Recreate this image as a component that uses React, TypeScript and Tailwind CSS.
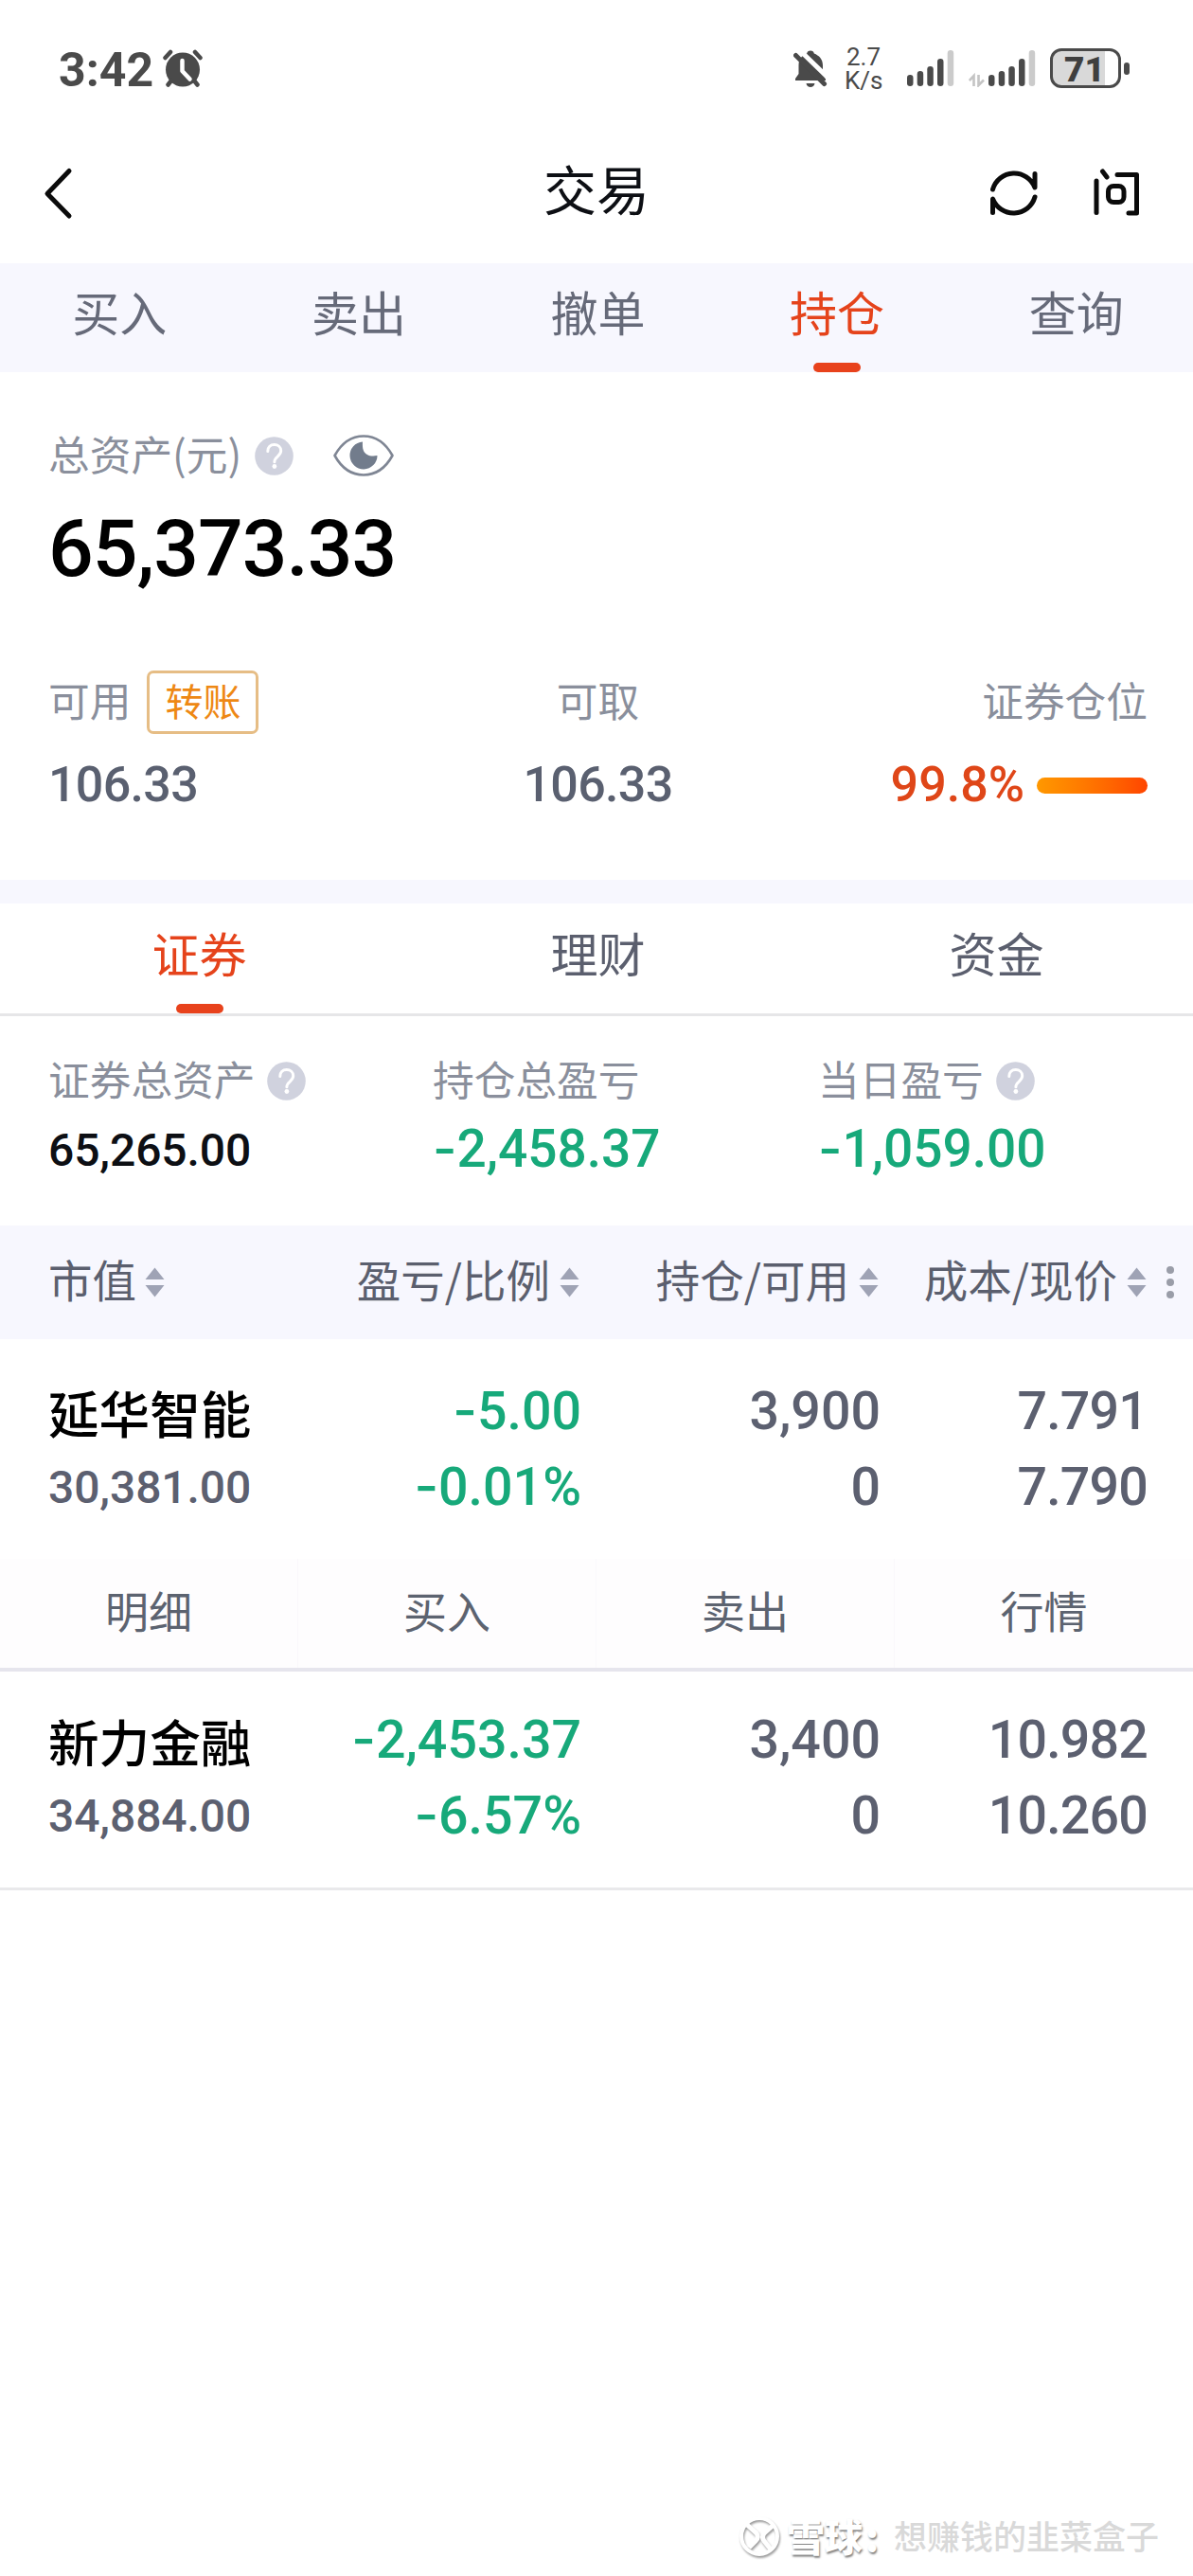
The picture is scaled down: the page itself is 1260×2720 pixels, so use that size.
/**
 * Pantalla de posiciones (持仓) de la sección de trading
 */
import type { ReactNode } from 'react';

interface Holding {
  name: string;
  marketValue: string;
  profit: string;
  ratio: string;
  amount: string;
  available: string;
  cost: string;
  price: string;
  expanded?: boolean;
}

const MAIN_TABS = ['买入', '卖出', '撤单', '持仓', '查询'];
const ASSET_TABS = ['证券', '理财', '资金'];
const ROW_ACTIONS = ['明细', '买入', '卖出', '行情'];
const COLUMNS = ['盈亏/比例', '持仓/可用', '成本/现价'];

const HOLDINGS: Holding[] = [
  {
    name: '延华智能',
    marketValue: '30,381.00',
    profit: '-5.00',
    ratio: '-0.01%',
    amount: '3,900',
    available: '0',
    cost: '7.791',
    price: '7.790',
    expanded: true,
  },
  {
    name: '新力金融',
    marketValue: '34,884.00',
    profit: '-2,453.37',
    ratio: '-6.57%',
    amount: '3,400',
    available: '0',
    cost: '10.982',
    price: '10.260',
  },
];

/* ---------- Iconos ---------- */

function AlarmIcon() {
  return (
    <svg width="42" height="40" viewBox="0 0 42 40" fill="none">
      <circle cx="21" cy="21.5" r="18" fill="#4a4a4a" />
      <path d="M2.5 9 8 3M39.5 9 34 3" stroke="#4a4a4a" strokeWidth="4.5" strokeLinecap="round" />
      <path d="M9 33 5.5 37.5M33 33 36.5 37.5" stroke="#4a4a4a" strokeWidth="4.5" strokeLinecap="round" />
      <path d="M20.5 12v11l8 8.5" stroke="#fff" strokeWidth="4.5" strokeLinecap="round" strokeLinejoin="round" />
    </svg>
  );
}

function BellOffIcon() {
  return (
    <svg width="36" height="40" viewBox="0 0 36 40">
      <path
        d="M18 1.5c2.2 0 3.5 1.2 3.8 3C27 6.5 31 10.5 31 17v8l3 6.5v1.5H2v-2l3.5-5V17c0-6.5 3.5-10.5 8.7-12.5.3-1.8 1.6-3 3.8-3z"
        fill="#4a4a4a"
      />
      <path d="M13.5 36h9c-.4 2.4-2.3 4-4.5 4s-4.1-1.6-4.5-4z" fill="#4a4a4a" />
      <path d="M4-1.5 39 32.5" stroke="#fff" strokeWidth="5" />
      <path d="M0 0h8L4 5z" fill="#fff" />
      <path d="M2.5 6.5 32.5 36.5" stroke="#4a4a4a" strokeWidth="5" strokeLinecap="round" />
    </svg>
  );
}

function SignalIcon() {
  return (
    <svg width="50" height="40" viewBox="0 0 50 40">
      <rect x="0" y="27" width="6.5" height="12" rx="3.2" fill="#4a4a4a" />
      <rect x="10.7" y="23" width="6.5" height="16" rx="3.2" fill="#4a4a4a" />
      <rect x="21.3" y="18" width="6.5" height="21" rx="3.2" fill="#4a4a4a" />
      <rect x="32" y="10" width="6.5" height="29" rx="3.2" fill="#4a4a4a" />
      <rect x="42.7" y="1" width="6.5" height="38" rx="3.2" fill="#cbcbcb" />
    </svg>
  );
}

function DataArrowsIcon() {
  return (
    <svg width="17" height="40" viewBox="0 0 17 40" fill="none" stroke="#c4c4c4" strokeWidth="2.6">
      <path d="M.8 33 5.5 28V39" />
      <path d="M10.5 27v11l5.5-5.5" />
    </svg>
  );
}

function BackIcon() {
  return (
    <svg width="32" height="56" viewBox="0 0 32 56" fill="none">
      <path d="M28 4.5 5 28.5 28 52" stroke="#0b0b0b" strokeWidth="5" strokeLinecap="round" strokeLinejoin="round" />
    </svg>
  );
}

function RefreshIcon() {
  return (
    <svg width="52" height="54" viewBox="0 0 52 54" fill="none" stroke="#0b0b0b" strokeWidth="5" strokeLinecap="round" strokeLinejoin="round">
      <path d="M3.5 23A23.5 23.5 0 0 1 48 21V6.5" />
      <path d="M48 31A23.5 23.5 0 0 1 3.5 33V47.5" />
    </svg>
  );
}

function AskIcon() {
  return (
    <svg width="48" height="54" viewBox="0 0 48 54" fill="none" stroke="#0b0b0b" strokeWidth="5" strokeLinecap="round" strokeLinejoin="round">
      <path d="M3 14V47.5" />
      <path d="M9.5 4 14 10" />
      <path d="M25 7.5H45.5V48H37" />
      <rect x="15.5" y="19.5" width="16.5" height="17" rx="5.5" />
    </svg>
  );
}

function EyeIcon() {
  return (
    <svg width="64" height="44" viewBox="0 0 64 44" fill="none">
      <path
        d="M1.5 22C9 8.5 19.5 1.5 32 1.5S55 8.5 62.5 22C55 35.5 44.5 42.5 32 42.5S9 35.5 1.5 22z"
        stroke="#7f8694"
        strokeWidth="2.6"
        strokeLinejoin="round"
      />
      <path d="M31 7.5A14.5 14.5 0 1 0 46.5 22c-7 1.5-12.5-.5-14.5-5-1.2-3-1.2-6.5-1-9.5z" fill="#727c8c" />
    </svg>
  );
}

function HelpIcon() {
  return (
    <svg width="41" height="41" viewBox="0 0 41 41" fill="none">
      <circle cx="20.5" cy="20.5" r="20.3" fill="#d0d2de" />
      <path
        d="M13.8 15.5c0-4.4 2.9-7 6.9-7s7 2.6 7 6.5c0 3-1.7 4.4-3.8 6.3-2 1.7-3 2.9-3 5.4"
        stroke="#fff"
        strokeWidth="3"
        strokeLinecap="round"
      />
      <circle cx="20.9" cy="31.5" r="2.4" fill="#fff" />
    </svg>
  );
}

function SortIcon() {
  return (
    <svg width="21" height="32" viewBox="0 0 21 32" fill="#9fa3b5" className="shrink-0">
      <path d="M10.5.5 20.5 13H.5z" />
      <path d="M10.5 31.5.5 19h20z" />
    </svg>
  );
}

function XueqiuLogo() {
  return (
    <svg width="46" height="46" viewBox="0 0 46 46" fill="none" className="drop-shadow-[1px_2px_1px_rgba(0,0,0,0.4)]">
      <circle cx="22" cy="22" r="19" stroke="#fff" strokeWidth="4" />
      <path d="M8 9 19 19q3 4-1 8l-7 7" stroke="#fff" strokeWidth="5" />
      <path d="M36 11 27 19q-3 4 0 8l8 10" stroke="#fff" strokeWidth="5" />
    </svg>
  );
}

/* ---------- Piezas comunes ---------- */

function Num({ value, className = '' }: { value: string; className?: string }) {
  const negative = value.startsWith('-');
  return (
    <div className={`whitespace-nowrap font-['Roboto',sans-serif] font-medium ${className}`}>
      {negative && <span className="font-['Inter',sans-serif] leading-[0]">-</span>}
      {negative ? value.slice(1) : value}
    </div>
  );
}

function Label({ children }: { children: ReactNode }) {
  return <span className="-mt-[7px] whitespace-nowrap text-[43.7px] leading-[44px] text-[#8a8f9c]">{children}</span>;
}

function StatusBar() {
  return (
    <div className="flex h-[130px] items-center pt-[14px] pr-[67px] pl-[62px]">
      <span className="pt-[3px] font-['Roboto',sans-serif] text-[50px] leading-[50px] font-bold text-[#4a4a4a]">
        3:42
      </span>
      <div className="ml-[10px]">
        <AlarmIcon />
      </div>
      <div className="ml-auto">
        <BellOffIcon />
      </div>
      <div className="ml-[18px] w-[40px] pt-px text-center font-['Roboto',sans-serif] text-[26px] leading-[25px] text-[#4a4a4a]">
        <div>2.7</div>
        <div>K/s</div>
      </div>
      <div className="ml-[26px]">
        <SignalIcon />
      </div>
      <div className="ml-[15px]">
        <DataArrowsIcon />
      </div>
      <div className="ml-[4px]">
        <SignalIcon />
      </div>
      <div className="ml-[15px] flex items-center gap-[3px]">
        <div className="flex h-[42px] w-[75px] items-center justify-center rounded-[12px] border-[3px] border-[#4a4a4a] bg-[linear-gradient(to_right,#d9d9d9_80%,#fff_80%)] pt-[3px] pr-[2px] font-['Roboto',sans-serif] text-[37px] leading-none font-black text-[#3f3f3f]">
          71
        </div>
        <div className="h-[13px] w-[6px] rounded-[3px] bg-[#4a4a4a]" />
      </div>
    </div>
  );
}

function NavBar() {
  return (
    <div className="grid h-[148px] grid-cols-[1fr_auto_1fr] items-center pr-[57px] pl-[45px]">
      <BackIcon />
      <h1 className="-mt-[13px] ml-[12px] text-[56px] leading-[56px] text-[#0d0f14]">交易</h1>
      <div className="flex items-center justify-end gap-[58px]">
        <RefreshIcon />
        <AskIcon />
      </div>
    </div>
  );
}

function Summary() {
  return (
    <section className="h-[536px] pt-[66px] pr-[48px] pl-[51px]">
      <div className="flex h-[44px] items-center">
        <Label>总资产(元)</Label>
        <div className="ml-[14px]">
          <HelpIcon />
        </div>
        <div className="ml-[42px]">
          <EyeIcon />
        </div>
      </div>
      <Num value="65,373.33" className="mt-[35px] text-[84px] leading-[84px] tracking-[-1px] text-black" />

      <div className="mt-[86px] grid grid-cols-3">
        <div>
          <div className="flex h-[67px] items-center">
            <Label>可用</Label>
            <div className="ml-[17px] flex h-[67px] w-[118px] items-center justify-center rounded-[7px] border-[3px] border-[#e6bd85] text-[40px] text-[#ee8814]">
              <span className="-mt-[6px] leading-[40px]">转账</span>
            </div>
          </div>
          <Num value="106.33" className="mt-[28px] text-[52px] leading-[52px] tracking-[-0.7px] text-[#5a6070]" />
        </div>
        <div className="flex flex-col items-center">
          <div className="flex h-[67px] items-center">
            <Label>可取</Label>
          </div>
          <Num value="106.33" className="mt-[28px] text-[52px] leading-[52px] tracking-[-0.7px] text-[#5a6070]" />
        </div>
        <div className="flex flex-col items-end">
          <div className="flex h-[67px] items-center">
            <Label>证券仓位</Label>
          </div>
          <div className="mt-[28px] flex items-center gap-[13px]">
            <Num value="99.8%" className="text-[52px] leading-[52px] text-[#df4618]" />
            <div className="h-[17px] w-[117px] rounded-full bg-gradient-to-r from-[#ff9800] to-[#ff4400]" />
          </div>
        </div>
      </div>
    </section>
  );
}

function Stats() {
  return (
    <section className="grid h-[221px] grid-cols-[406px_407px_1fr] pt-[46px] pl-[51px]">
      <div>
        <div className="flex h-[44px] items-center gap-[13px]">
          <Label>证券总资产</Label>
          <HelpIcon />
        </div>
        <Num value="65,265.00" className="mt-[24px] text-[48px] leading-[55px] tracking-[-0.1px] text-[#0d0f14]" />
      </div>
      <div>
        <div className="flex h-[44px] items-center">
          <Label>持仓总盈亏</Label>
        </div>
        <Num value="-2,458.37" className="mt-[23px] text-[55px] leading-[55px] text-[#17a97a]" />
      </div>
      <div>
        <div className="flex h-[44px] items-center gap-[13px]">
          <Label>当日盈亏</Label>
          <HelpIcon />
        </div>
        <Num value="-1,059.00" className="mt-[23px] text-[55px] leading-[55px] text-[#17a97a]" />
      </div>
    </section>
  );
}

function TableHeader() {
  return (
    <div className="grid h-[120px] grid-cols-[261px_300px_316px_283px_49px] items-center bg-[#f7f7fe] pl-[51px] text-[46.5px] leading-[48px] text-[#5b5f6e]">
      <div className="flex items-center gap-[9px]">
        <span className="-mt-[9px]">市值</span>
        <SortIcon />
      </div>
      {COLUMNS.map((col) => (
        <div key={col} className="flex items-center justify-end gap-[10px] whitespace-nowrap">
          <span className="-mt-[9px]">{col}</span>
          <SortIcon />
        </div>
      ))}
      <div className="flex flex-col gap-[5px] pl-[21px]">
        <i className="h-[8px] w-[8px] rounded-full bg-[#9a9da8]" />
        <i className="h-[8px] w-[8px] rounded-full bg-[#9a9da8]" />
        <i className="h-[8px] w-[8px] rounded-full bg-[#9a9da8]" />
      </div>
    </div>
  );
}

function HoldingRow({ item }: { item: Holding }) {
  return (
    <div className={item.expanded ? 'border-b-4 border-[#e6e5ed]' : 'border-b-[3px] border-[#e9e9eb]'}>
      <div className="grid grid-cols-[261px_302px_316px_282px] pt-[33px] pb-[35px] pl-[51px] text-right text-[55.5px] leading-[80px] text-[#5c6070]">
        <div className="text-left">
          <div className="h-[80px] text-[53.6px] leading-[80px] font-medium text-black">{item.name}</div>
          <Num value={item.marketValue} className="text-[48px] tracking-[-0.1px]" />
        </div>
        <div className="text-[#17a97a]">
          <Num value={item.profit} />
          <Num value={item.ratio} />
        </div>
        <div>
          <Num value={item.amount} />
          <Num value={item.available} />
        </div>
        <div className="tracking-[-0.8px]">
          <Num value={item.cost} />
          <Num value={item.price} />
        </div>
      </div>
      {item.expanded && (
        <div className="grid h-[115px] grid-cols-4 divide-x divide-[#faf8fb] bg-[#fefdfe] text-center text-[46px] leading-[107px] text-[#5c6370]">
          {ROW_ACTIONS.map((action) => (
            <div key={action}>{action}</div>
          ))}
        </div>
      )}
    </div>
  );
}

export default function App() {
  return (
    <div className="relative h-[2720px] w-[1260px] overflow-hidden bg-white font-['Noto_Sans_CJK_SC',sans-serif]">
      <StatusBar />
      <NavBar />

      {/* Pestañas principales */}
      <nav className="-mr-[3px] grid h-[115px] grid-cols-5 bg-[#f7f7fe]">
        {MAIN_TABS.map((tab) => (
          <div key={tab} className="flex flex-col items-center justify-between pt-[25px] text-[50px] leading-[50px]">
            <span className={tab === '持仓' ? 'text-[#e5431b]' : 'text-[#666a79]'}>{tab}</span>
            {tab === '持仓' && <div className="h-[10px] w-[50px] rounded-full bg-[#e8421c]" />}
          </div>
        ))}
      </nav>

      <Summary />
      <div className="h-[25px] bg-[#f7f7fe]" />

      {/* Pestañas de activos */}
      <nav className="-mr-[3px] grid h-[119px] grid-cols-3 border-b-[3px] border-[#e6e6e8]">
        {ASSET_TABS.map((tab) => (
          <div key={tab} className="flex flex-col items-center justify-between pt-[26px] text-[50px] leading-[50px]">
            <span className={tab === '证券' ? 'text-[#e5431b]' : 'text-[#5b5f6e]'}>{tab}</span>
            {tab === '证券' && <div className="h-[10px] w-[50px] rounded-full bg-[#e8421c]" />}
          </div>
        ))}
      </nav>

      <Stats />
      <TableHeader />
      <div className="pt-1">
        {HOLDINGS.map((item) => (
          <HoldingRow key={item.name} item={item} />
        ))}
      </div>

      {/* Marca de agua */}
      <div className="absolute top-[2655px] right-[36px] flex h-[48px] items-center whitespace-nowrap">
        <XueqiuLogo />
        <div className="ml-[5px] flex w-[100px] -translate-y-[2px] text-[40px] leading-[48px] font-black text-white [text-shadow:1px_2px_2px_rgba(0,0,0,0.5)]">
          雪球<span className="pl-[3px]">:</span>
        </div>
        <span className="ml-[13px] -translate-y-[2px] text-[35px] leading-[48px] font-medium text-[#d9d9d9]">想赚钱的韭菜盒子</span>
      </div>
    </div>
  );
}
